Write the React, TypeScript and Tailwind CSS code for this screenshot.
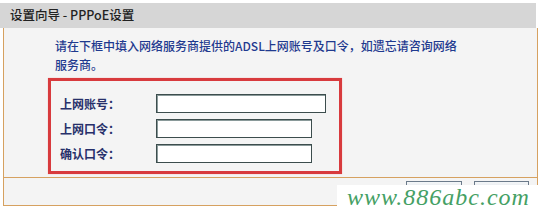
const cjk = '"Noto Sans CJK SC", "Liberation Sans", sans-serif';

type FieldProps = {
  label: string;
  width: string;
};

function Field({ label, width }: FieldProps) {
  return (
    <div className="flex h-[19px] items-center">
      <span className="w-[96px] text-[12px] font-semibold leading-none text-[#27306a]">{label}</span>
      <input
        type="password"
        className={`h-[19px] ${width} border border-[#3c4d4d] bg-white shadow-[inset_1px_1px_0_#8a9a9a] outline-none`}
      />
    </div>
  );
}

export default function App() {
  return (
    <div className="relative h-[209px] w-[540px] overflow-hidden bg-white" style={{ fontFamily: cjk }}>
      <div className="mt-[3px] flex h-[25px] w-[536px] items-center bg-[#d6d6d6] pl-[10px] text-[12.5px] font-medium text-[#222]">
        设置向导 - PPPoE设置
      </div>

      <div className="ml-[3px] w-[535px] border-x border-b border-[#d6a160] bg-[#f4f4f4]">
        <div className="h-[150px] border-b border-[#d6a160] pt-[8px]">
          <p className="pl-[51px] text-[12px] font-medium leading-[19px] text-[#1f3a8f]">
            请在下框中填入网络服务商提供的ADSL上网账号及口令，如遗忘请咨询网络
            <br />
            服务商。
          </p>
          <div className="ml-[44px] mt-[4px] flex h-[96px] w-[294px] flex-col gap-[6px] border-[3px] border-[#d83a3d] pl-[9px] pt-[13px] shadow-[0_0_1px_#f0a0a0]">
            <Field label="上网账号：" width="w-[170px]" />
            <Field label="上网口令：" width="w-[156px]" />
            <Field label="确认口令：" width="w-[156px]" />
          </div>
        </div>

        <div className="flex h-[27px] justify-end gap-[12px] pr-[8px] pt-[3px]">
          <button
            aria-label="上一步"
            className="h-[20px] w-[56px] border border-[#6b7a8a] bg-gradient-to-b from-[#f4f6f8] to-[#c9d0d8]"
          />
          <button
            aria-label="下一步"
            className="h-[20px] w-[55px] border border-[#6b7a8a] bg-gradient-to-b from-[#f4f6f8] to-[#c9d0d8]"
          />
        </div>
      </div>

      <div
        className="absolute left-[337px] top-[185px] flex h-[24px] w-[203px] items-center justify-center bg-white text-[24px] italic leading-[24px] tracking-[1px] text-[#45a064]"
        style={{ fontFamily: '"Liberation Serif", serif' }}
      >
        www.886abc.com
      </div>
    </div>
  );
}
